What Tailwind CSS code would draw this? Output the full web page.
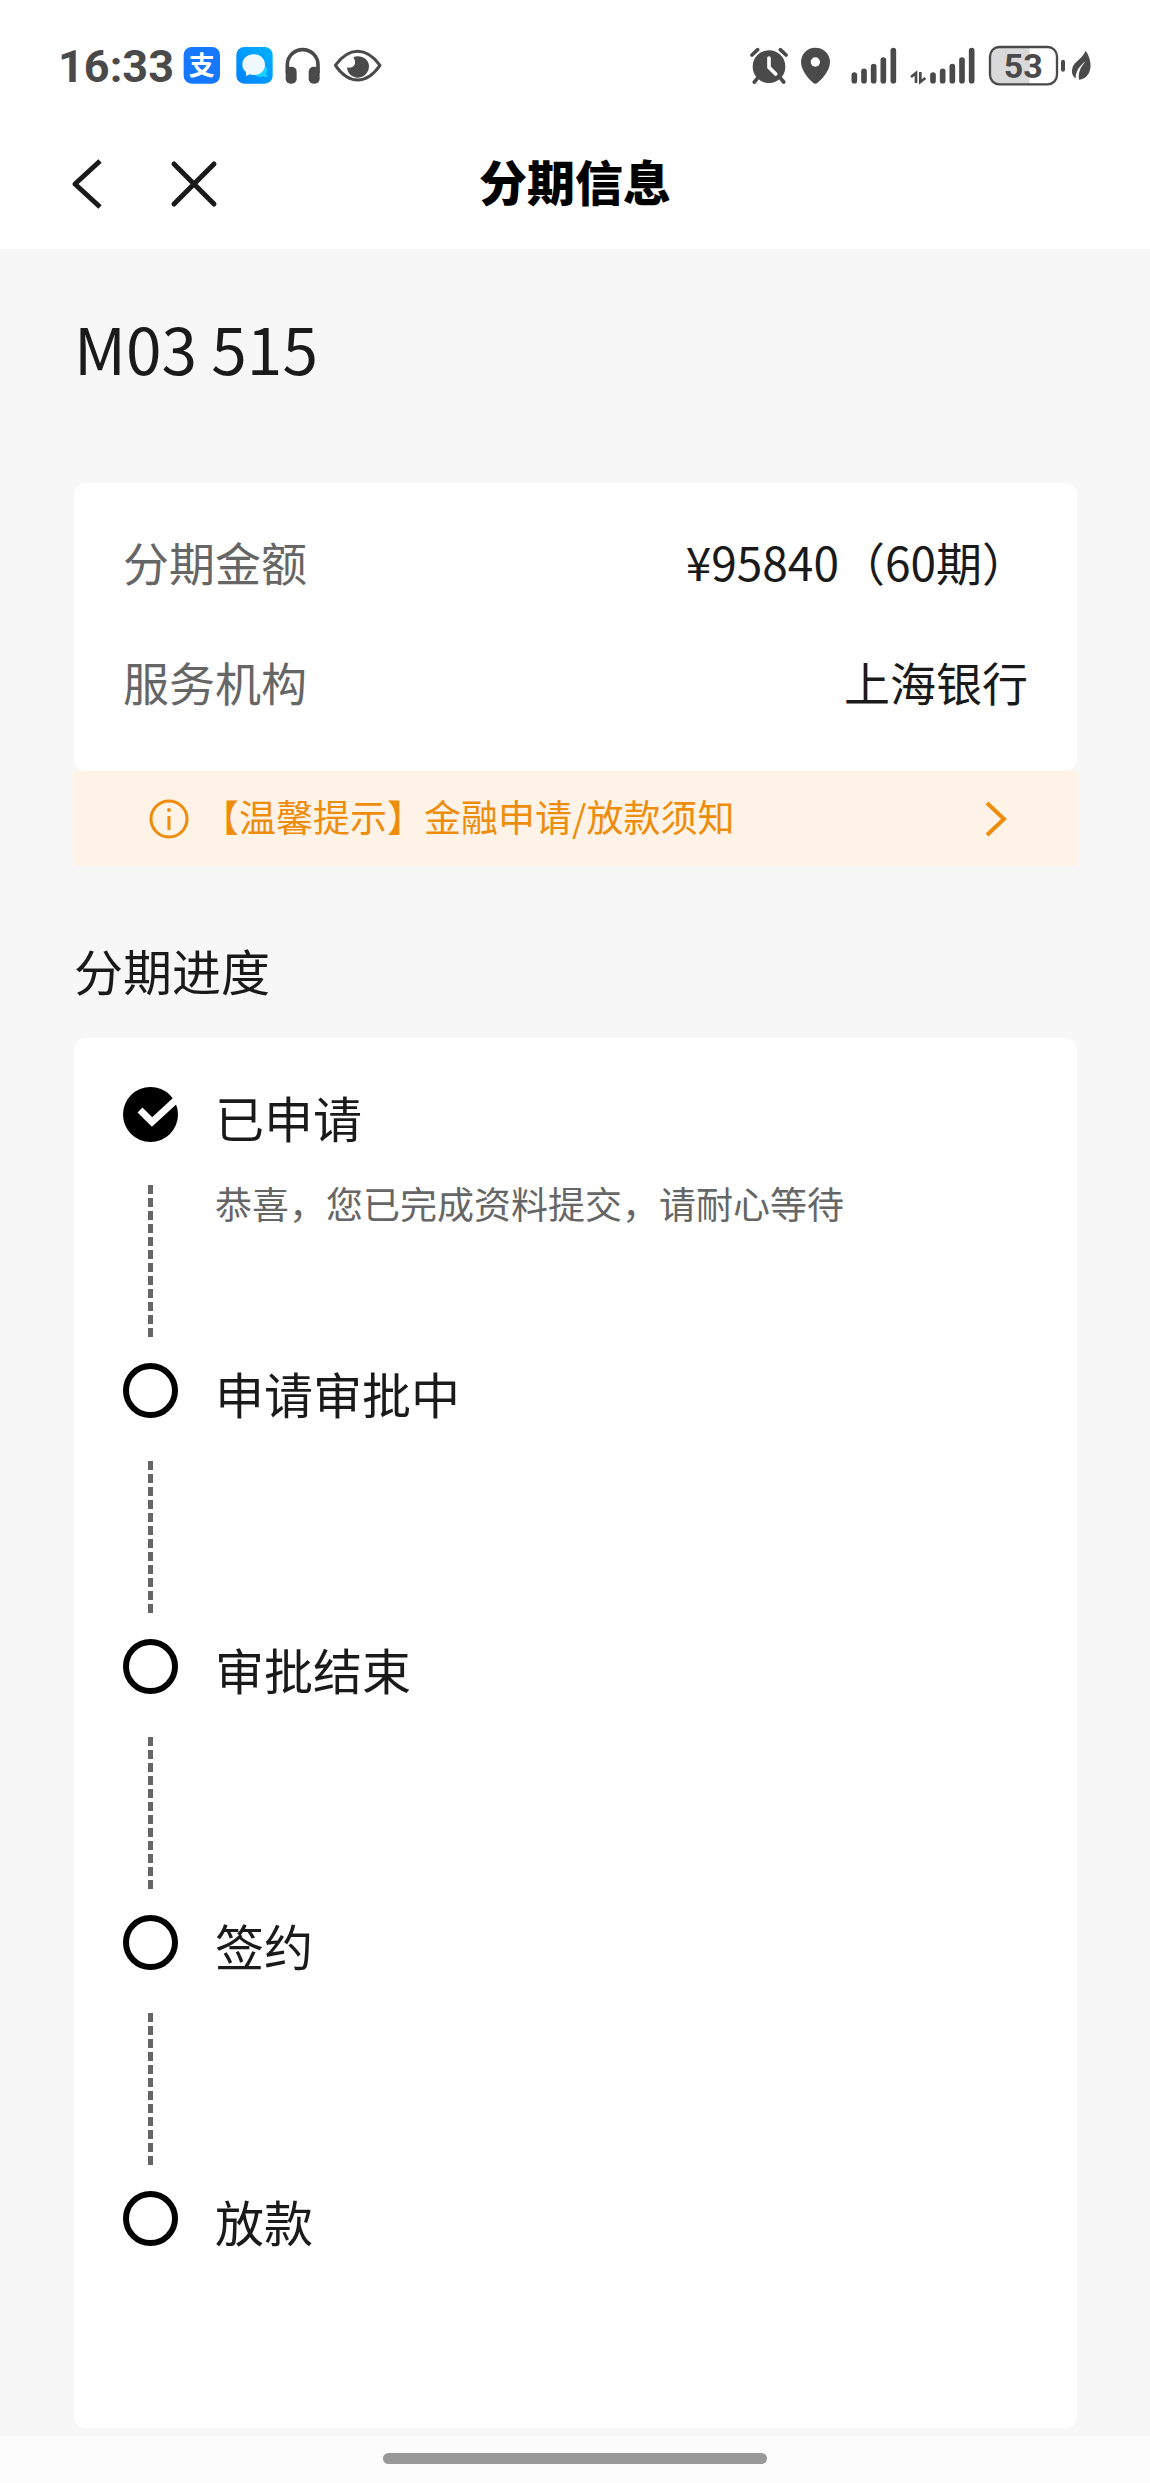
<!DOCTYPE html>
<html lang="zh-CN">
<head>
  <meta charset="UTF-8" />
  <meta name="viewport" content="width=device-width, initial-scale=1.0"/>
  <title>分期信息</title>
  <script src="https://cdn.jsdelivr.net/npm/@tailwindcss/browser@4"></script>
</head>
<body class="bg-[#f7f7f7] text-[#1a1a1a] font-['Noto_Sans_CJK_SC',sans-serif] min-h-screen flex flex-col">

  <div class="bg-white">
    <!-- Status bar -->
    <div class="flex items-center justify-between pt-11 pb-7 pl-[58px] pr-[56px] text-[#4a4a4a]">
      <div class="flex items-center">
        <span class="w-[124px] pt-1 text-[45px] leading-[38px] font-bold font-['Roboto',sans-serif]">16:33</span>
        <!-- Pay app -->
        <svg class="w-[40px] h-[42px]" viewBox="426 42 120 126">
          <rect x="431" y="51" width="109" height="110" rx="24" fill="#1677ff"/>
          <text x="485" y="134" font-size="78" font-weight="700" fill="#fff" text-anchor="middle" font-family="Noto Sans CJK SC">支</text>
        </svg>
        <!-- Chat app -->
        <svg class="ml-[12px] w-[40px] h-[42px]" viewBox="582 42 120 126">
          <defs>
            <linearGradient id="chat" x1="0" y1="1" x2="1" y2="0">
              <stop offset="0" stop-color="#0080ff"/>
              <stop offset="1" stop-color="#00b4ff"/>
            </linearGradient>
          </defs>
          <rect x="589" y="51" width="109" height="110" rx="24" fill="url(#chat)"/>
          <path d="M672 104q16 14 6 26l5 12-14-3q-14 5-24-4z" fill="#19d3ff"/>
          <path d="M641 73c20 0 34 13 34 31s-14 31-34 31c-4 0-8-1-11-2l-12 5v-12c-7-6-11-13-11-22 0-18 14-31 34-31z" fill="#f0f8ff"/>
        </svg>
        <!-- Headphones -->
        <svg class="ml-[8px] w-[40px] h-[42px]" viewBox="726 42 120 126">
          <path d="M742 128v-24a46 45 0 0 1 92 0v24" fill="none" stroke="currentColor" stroke-width="11"/>
          <rect x="737" y="110" width="33" height="51" rx="15" fill="currentColor"/>
          <rect x="806" y="110" width="33" height="51" rx="15" fill="currentColor"/>
        </svg>
        <!-- Eye -->
        <svg class="ml-[10px] w-[50px] h-[42px]" viewBox="876 42 150 126">
          <path d="M886 106q31-42 67-42t67 42q-31 44-67 44t-67-44z" fill="none" stroke="currentColor" stroke-width="9" stroke-linejoin="round"/>
          <path d="M940 82c16-9 47 1 47 27 0 19-15 34-33 34s-32-13-33-31c14 6 34-7 19-30z" fill="currentColor"/>
        </svg>
      </div>

      <div class="flex items-center">
        <!-- Alarm -->
        <svg class="w-[42px] h-[42px]" viewBox="54 42 126 126">
          <circle cx="117" cy="110" r="49" fill="currentColor"/>
          <path d="M66 75l17-16M168 75l-17-16M82 145l-9 11M152 145l9 11" stroke="currentColor" stroke-width="11" stroke-linecap="round"/>
          <path d="M117 84v28l20 20" fill="none" stroke="#fff" stroke-width="11" stroke-linecap="round" stroke-linejoin="round"/>
        </svg>
        <!-- Location -->
        <svg class="ml-[8px] w-[34px] h-[42px]" viewBox="207 42 102 126">
          <path d="M259 53c25 0 44 19 44 43 0 27-27 54-38 63q-6 4-12 0c-11-9-37-36-37-63 0-24 18-43 43-43z" fill="currentColor"/>
          <circle cx="259" cy="96" r="14" fill="#fff"/>
        </svg>
        <!-- Signal 1 -->
        <svg class="ml-[17px] w-[50px] h-[42px]" viewBox="360 42 150 126">
          <path d="M376 135v17M405 124v28M434 110v42M463 90v62M493 62v90" stroke="currentColor" stroke-width="17" stroke-linecap="round"/>
        </svg>
        <!-- Signal 2 with data arrows -->
        <svg class="ml-[10px] w-[68px] h-[42px]" viewBox="540 42 204 126">
          <path d="M546 141l15-12v30M574 126v30l15-12" fill="none" stroke="currentColor" stroke-width="8"/>
          <path d="M612 135v17M641 124v28M670 110v42M699 90v62M728 62v90" stroke="currentColor" stroke-width="17" stroke-linecap="round"/>
        </svg>
        <!-- Battery -->
        <svg class="ml-[11px] w-[80px] h-[42px]" viewBox="777 42 240 126">
          <path d="M812 52h90v110h-90q-28 0-28-28v-54q0-28 28-28z" fill="#d9d9d9"/>
          <rect x="783" y="51" width="201" height="112" rx="28" fill="none" stroke="currentColor" stroke-width="7"/>
          <rect x="996" y="89" width="12" height="36" rx="6" fill="currentColor"/>
          <text x="883" y="145" font-size="102" font-weight="700" fill="currentColor" text-anchor="middle" font-family="Roboto">53</text>
        </svg>
        <!-- Leaf -->
        <svg class="ml-[2px] w-[24px] h-[42px]" viewBox="1023 42 72 126">
          <path d="M1070 62c14 20 19 47 11 64-6 14-17 22-31 23-3-21 4-37 20-55-20 14-30 31-30 51-13-8-14-26-6-40 9-14 26-20 36-43z" fill="currentColor"/>
        </svg>
      </div>
    </div>

    <!-- Title bar -->
    <header class="grid grid-cols-[1fr_auto_1fr] items-center h-[135px] px-[68px]">
      <div class="flex items-center gap-[66px] pt-1">
        <button type="button" aria-label="返回">
          <svg class="w-[36px] h-[52px]" viewBox="0 0 36 52" fill="none" stroke="currentColor" stroke-width="5">
            <path d="M32 3L7 26l25 23" stroke-linejoin="round"/>
          </svg>
        </button>
        <button type="button" aria-label="关闭">
          <svg class="w-[48px] h-[52px]" viewBox="0 0 48 52" fill="none" stroke="currentColor" stroke-width="5" stroke-linecap="round">
            <path d="M4 6l40 40M44 6L4 46"/>
          </svg>
        </button>
      </div>
      <div class="text-[48px] leading-[60px] font-black text-black pb-1">分期信息</div>
      <div></div>
    </header>
  </div>

  <main class="pl-[74px] pr-[73px] pb-2">
    <h1 class="pt-[58px] pb-24 text-[64px] leading-[80px]">M03 515</h1>

    <!-- Summary -->
    <dl class="bg-white rounded-xl px-[49px] pt-[18px] pb-[30px] text-[46px]">
      <div class="flex items-center justify-between h-[120px]">
        <dt class="text-[#666]">分期金额</dt>
        <dd>¥95840（60期）</dd>
      </div>
      <div class="flex items-center justify-between h-[120px]">
        <dt class="text-[#666]">服务机构</dt>
        <dd>上海银行</dd>
      </div>
    </dl>

    <!-- Notice -->
    <a href="#" class="flex items-center h-[95px] pl-[74px] pr-[68px] rounded-b-sm bg-[#fff3e7] text-[#ee8c0c]">
      <svg class="w-[42px] h-[42px]" viewBox="0 0 42 42" fill="none" stroke="currentColor" stroke-width="3">
        <circle cx="21" cy="21" r="18"/>
        <path d="M21 18v14"/>
        <circle cx="21" cy="12" r="2" fill="currentColor" stroke="none"/>
      </svg>
      <span class="ml-3 pb-1.5 text-[37px] leading-[48px]">【温馨提示】金融申请/放款须知</span>
      <svg class="ml-auto w-[26px] h-[38px]" viewBox="0 0 26 38" fill="none" stroke="currentColor" stroke-width="4">
        <path d="M4 3l17 16L4 35"/>
      </svg>
    </a>

    <h2 class="pt-[74px] pb-[38px] text-[49px] leading-[60px]">分期进度</h2>

    <!-- Progress -->
    <ol class="bg-white rounded-xl px-[49px] pt-[49px] pb-[177px] text-[49px] leading-[60px]">
      <li class="flex gap-[37px]">
        <div class="flex flex-col items-center">
          <svg class="w-[55px] h-[55px]" viewBox="0 0 55 55">
            <circle cx="27.5" cy="27.5" r="27.5" fill="#000"/>
            <path d="M17 23l12 12L54 12" fill="none" stroke="#fff" stroke-width="7"/>
          </svg>
          <svg class="mt-[43px] mb-[26px] w-[5px] h-[152px]" viewBox="0 0 5 152">
            <path d="M2.5 0v152" stroke="#666" stroke-width="5" stroke-dasharray="9 4"/>
          </svg>
        </div>
        <div>
          <h3>已申请</h3>
          <p class="mt-8 text-[37px] leading-[48px] text-[#666]">恭喜，您已完成资料提交，请耐心等待</p>
        </div>
      </li>
      <li class="flex gap-[37px]">
        <div class="flex flex-col items-center">
          <span class="size-[55px] rounded-full border-6 border-black"></span>
          <svg class="mt-[43px] mb-[26px] w-[5px] h-[152px]" viewBox="0 0 5 152">
            <path d="M2.5 0v152" stroke="#666" stroke-width="5" stroke-dasharray="9 4"/>
          </svg>
        </div>
        <h3>申请审批中</h3>
      </li>
      <li class="flex gap-[37px]">
        <div class="flex flex-col items-center">
          <span class="size-[55px] rounded-full border-6 border-black"></span>
          <svg class="mt-[43px] mb-[26px] w-[5px] h-[152px]" viewBox="0 0 5 152">
            <path d="M2.5 0v152" stroke="#666" stroke-width="5" stroke-dasharray="9 4"/>
          </svg>
        </div>
        <h3>审批结束</h3>
      </li>
      <li class="flex gap-[37px]">
        <div class="flex flex-col items-center">
          <span class="size-[55px] rounded-full border-6 border-black"></span>
          <svg class="mt-[43px] mb-[26px] w-[5px] h-[152px]" viewBox="0 0 5 152">
            <path d="M2.5 0v152" stroke="#666" stroke-width="5" stroke-dasharray="9 4"/>
          </svg>
        </div>
        <h3>签约</h3>
      </li>
      <li class="flex gap-[37px]">
        <span class="size-[55px] rounded-full border-6 border-black"></span>
        <h3>放款</h3>
      </li>
    </ol>
  </main>

  <!-- Gesture bar -->
  <footer class="mt-auto bg-[#fcfcfc] pt-[17px] pb-[19px]">
    <div class="mx-auto w-1/3 h-[11px] rounded-full bg-[#999]"></div>
  </footer>

</body>
</html>
